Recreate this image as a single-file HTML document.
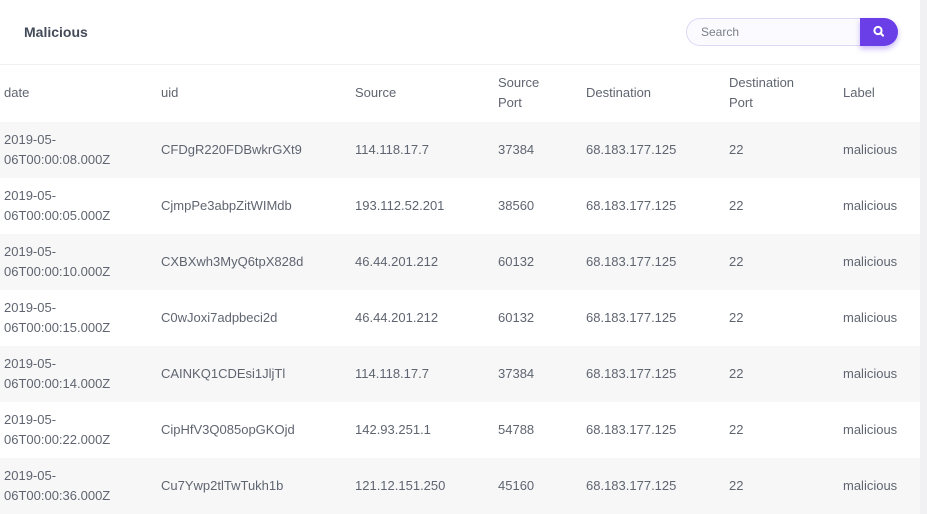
<!DOCTYPE html>
<html><head><style>
body{margin:0;width:927px;height:511px;overflow:hidden;background:#f1f1f4;font-family:"Liberation Sans",sans-serif;}
.card{position:absolute;left:0;top:0;width:920px;height:511px;background:#fff;}
.hdr{height:64px;border-bottom:1px solid #f0f0f3;position:relative;}
.title{position:absolute;left:24px;top:24px;font-size:14px;font-weight:bold;color:#434b59;}
.search{position:absolute;left:686px;top:18px;width:174px;height:28px;box-sizing:border-box;border:1px solid #ddd8f5;border-right:none;border-radius:14px 0 0 14px;background:#fbfbff;font-size:12px;color:#7a7f88;line-height:26px;padding-left:14px;}
.btn{position:absolute;left:860px;top:18px;width:38px;height:28px;background:#6b3fe8;border-radius:0 14px 14px 0;box-shadow:0 3px 6px rgba(107,63,232,.35);}
.row{position:absolute;left:0;width:920px;height:56px;font-size:13px;color:#5f6570;}
.row span{position:absolute;line-height:20px;}
.g{background:#f7f7f8;}
</style></head><body>
<div class="card">
<div class="hdr"><div class="title">Malicious</div><div class="search">Search</div>
<div class="btn"><svg width="38" height="28"><circle cx="18" cy="12.5" r="3.6" fill="none" stroke="#fff" stroke-width="2"/><line x1="20.6" y1="15.2" x2="23" y2="17.6" stroke="#fff" stroke-width="2.2" stroke-linecap="round"/></svg></div></div>
<div class="row" style="top:65px;height:56px">
<span style="left:4px;top:18px">date</span><span style="left:161px;top:18px">uid</span><span style="left:355px;top:18px">Source</span><span style="left:498px;top:8px">Source<br>Port</span><span style="left:586px;top:18px">Destination</span><span style="left:729px;top:8px">Destination<br>Port</span><span style="left:843px;top:18px">Label</span></div>
<div id="rows"></div>
</div>
<div class="row g" style="top:122px"><span style="left:4px;top:8px">2019-05-<br>06T00:00:08.000Z</span><span style="left:161px;top:18px">CFDgR220FDBwkrGXt9</span><span style="left:355px;top:18px">114.118.17.7</span><span style="left:498px;top:18px">37384</span><span style="left:586px;top:18px">68.183.177.125</span><span style="left:729px;top:18px">22</span><span style="left:843px;top:18px">malicious</span></div>
<div class="row" style="top:178px"><span style="left:4px;top:8px">2019-05-<br>06T00:00:05.000Z</span><span style="left:161px;top:18px">CjmpPe3abpZitWIMdb</span><span style="left:355px;top:18px">193.112.52.201</span><span style="left:498px;top:18px">38560</span><span style="left:586px;top:18px">68.183.177.125</span><span style="left:729px;top:18px">22</span><span style="left:843px;top:18px">malicious</span></div>
<div class="row g" style="top:234px"><span style="left:4px;top:8px">2019-05-<br>06T00:00:10.000Z</span><span style="left:161px;top:18px">CXBXwh3MyQ6tpX828d</span><span style="left:355px;top:18px">46.44.201.212</span><span style="left:498px;top:18px">60132</span><span style="left:586px;top:18px">68.183.177.125</span><span style="left:729px;top:18px">22</span><span style="left:843px;top:18px">malicious</span></div>
<div class="row" style="top:290px"><span style="left:4px;top:8px">2019-05-<br>06T00:00:15.000Z</span><span style="left:161px;top:18px">C0wJoxi7adpbeci2d</span><span style="left:355px;top:18px">46.44.201.212</span><span style="left:498px;top:18px">60132</span><span style="left:586px;top:18px">68.183.177.125</span><span style="left:729px;top:18px">22</span><span style="left:843px;top:18px">malicious</span></div>
<div class="row g" style="top:346px"><span style="left:4px;top:8px">2019-05-<br>06T00:00:14.000Z</span><span style="left:161px;top:18px">CAINKQ1CDEsi1JljTl</span><span style="left:355px;top:18px">114.118.17.7</span><span style="left:498px;top:18px">37384</span><span style="left:586px;top:18px">68.183.177.125</span><span style="left:729px;top:18px">22</span><span style="left:843px;top:18px">malicious</span></div>
<div class="row" style="top:402px"><span style="left:4px;top:8px">2019-05-<br>06T00:00:22.000Z</span><span style="left:161px;top:18px">CipHfV3Q085opGKOjd</span><span style="left:355px;top:18px">142.93.251.1</span><span style="left:498px;top:18px">54788</span><span style="left:586px;top:18px">68.183.177.125</span><span style="left:729px;top:18px">22</span><span style="left:843px;top:18px">malicious</span></div>
<div class="row g" style="top:458px"><span style="left:4px;top:8px">2019-05-<br>06T00:00:36.000Z</span><span style="left:161px;top:18px">Cu7Ywp2tlTwTukh1b</span><span style="left:355px;top:18px">121.12.151.250</span><span style="left:498px;top:18px">45160</span><span style="left:586px;top:18px">68.183.177.125</span><span style="left:729px;top:18px">22</span><span style="left:843px;top:18px">malicious</span></div>
</body></html>
